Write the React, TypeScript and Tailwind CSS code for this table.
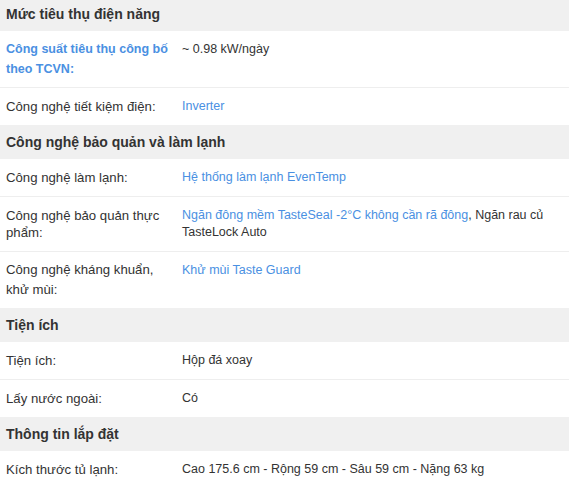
import React from 'react';

type Part = { text: string; link?: boolean };

interface Spec {
  label: string;
  labelLink?: boolean;
  tall?: boolean;
  value: Part[];
}

interface Group {
  title: string;
  items: Spec[];
}

const groups: Group[] = [
  {
    title: "Mức tiêu thụ điện năng",
    items: [
      { label: "Công suất tiêu thụ công bố theo TCVN:", labelLink: true, tall: true, value: [{ text: "~ 0.98 kW/ngày" }] },
      { label: "Công nghệ tiết kiệm điện:", value: [{ text: "Inverter", link: true }] },
    ],
  },
  {
    title: "Công nghệ bảo quản và làm lạnh",
    items: [
      { label: "Công nghệ làm lạnh:", value: [{ text: "Hệ thống làm lạnh EvenTemp", link: true }] },
      {
        label: "Công nghệ bảo quản thực phẩm:",
        value: [
          { text: "Ngăn đông mềm TasteSeal -2°C không cần rã đông", link: true },
          { text: ", Ngăn rau củ TasteLock Auto" },
        ],
      },
      { label: "Công nghệ kháng khuẩn, khử mùi:", tall: true, value: [{ text: "Khử mùi Taste Guard", link: true }] },
    ],
  },
  {
    title: "Tiện ích",
    items: [
      { label: "Tiện ích:", value: [{ text: "Hộp đá xoay" }] },
      { label: "Lấy nước ngoài:", value: [{ text: "Có" }] },
    ],
  },
  {
    title: "Thông tin lắp đặt",
    items: [
      { label: "Kích thước tủ lạnh:", value: [{ text: "Cao 175.6 cm - Rộng 59 cm - Sâu 59 cm - Nặng 63 kg" }] },
    ],
  },
];

const App = () => {
  return (
    <div className="w-[569px] h-[487px] overflow-hidden bg-white text-[#333] font-['Liberation_Sans',Arial,sans-serif]">
      {groups.map((group, gi) => (
        <div key={group.title}>
          <div
            className={`bg-[#f0f0f0] px-[6px] text-[14px] font-bold leading-[18px] ${
              gi === 0 ? 'pt-[5px] pb-[8px]' : 'py-[8px]'
            }`}
          >
            {group.title}
          </div>
          {group.items.map((item, ii) => (
            <div
              key={item.label}
              className={`flex ${
                ii < group.items.length - 1 ? 'border-b border-[#eeeeee]' : ''
              } ${item.tall ? 'pt-[8px] pb-[8px] leading-[20px]' : 'pt-[10px] pb-[10px] leading-[17px]'}`}
            >
              <div
                className={`w-[176px] shrink-0 px-[6px] ${
                  item.labelLink ? 'text-[#4a90e2] font-bold text-[12.5px]' : 'text-[13.2px]'
                }`}
              >
                {item.label}
              </div>
              <div className="flex-1 px-[6px] text-[12.5px]">
                {item.value.map((p, pi) =>
                  p.link ? (
                    <span key={pi} className="text-[#4a90e2]">
                      {p.text}
                    </span>
                  ) : (
                    <span key={pi}>{p.text}</span>
                  )
                )}
              </div>
            </div>
          ))}
        </div>
      ))}
    </div>
  );
};

export default App;
